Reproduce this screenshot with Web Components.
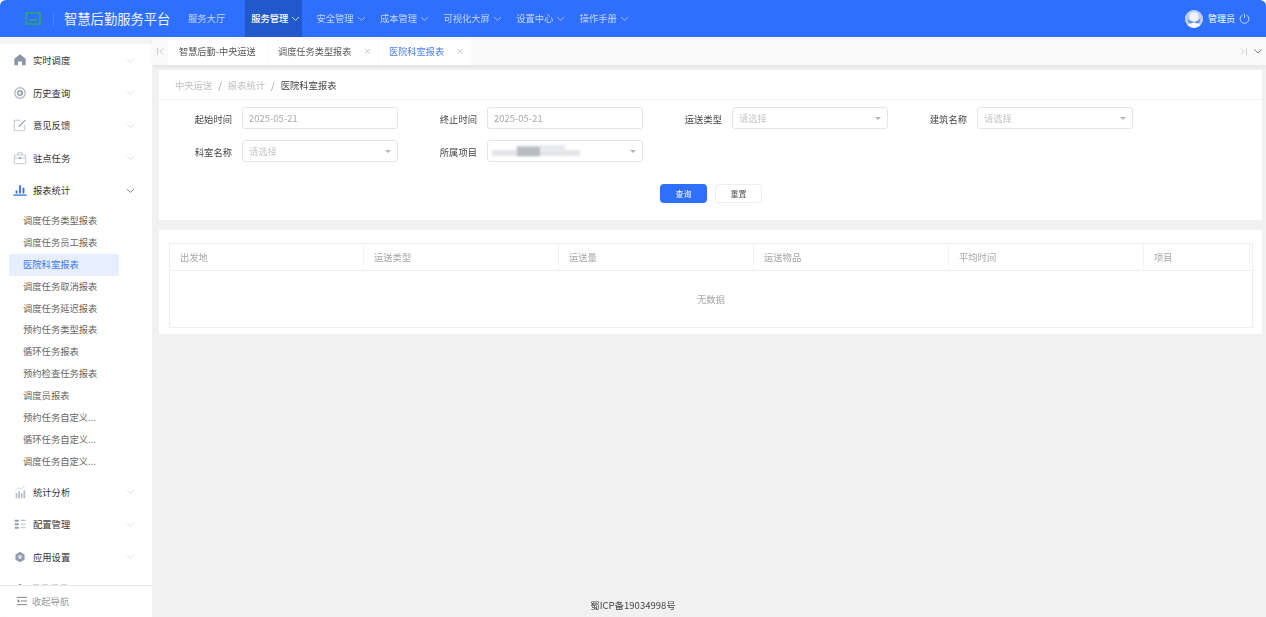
<!DOCTYPE html>
<html lang="zh">
<head>
<meta charset="utf-8">
<title>医院科室报表</title>
<style>
   html, body { margin: 0; height: 100%; overflow: hidden; background: #fff; }
   body { font-family: "Noto Sans CJK SC", "Noto Sans", sans-serif; font-size: 9.3px; }
</style>
</head>
<body>
<app-shell>
   <top-bar slot="top" title-text="智慧后勤服务平台" user="管理员">
      <top-link label="服务大厅" plain></top-link>
      <top-link label="服务管理" active></top-link>
      <top-link label="安全管理"></top-link>
      <top-link label="成本管理"></top-link>
      <top-link label="可视化大屏"></top-link>
      <top-link label="设置中心"></top-link>
      <top-link label="操作手册"></top-link>
   </top-bar>
   <side-nav slot="side">
      <side-group label="实时调度" icon="home"></side-group>
      <side-group label="历史查询" icon="history"></side-group>
      <side-group label="意见反馈" icon="edit"></side-group>
      <side-group label="驻点任务" icon="bag"></side-group>
      <side-group label="报表统计" icon="chart" open>
         <side-link>调度任务类型报表</side-link>
         <side-link>调度任务员工报表</side-link>
         <side-link active>医院科室报表</side-link>
         <side-link>调度任务取消报表</side-link>
         <side-link>调度任务延迟报表</side-link>
         <side-link>预约任务类型报表</side-link>
         <side-link>循环任务报表</side-link>
         <side-link>预约检查任务报表</side-link>
         <side-link>调度员报表</side-link>
         <side-link>预约任务自定义...</side-link>
         <side-link>循环任务自定义...</side-link>
         <side-link>调度任务自定义...</side-link>
      </side-group>
      <side-group label="统计分析" icon="stats"></side-group>
      <side-group label="配置管理" icon="list"></side-group>
      <side-group label="应用设置" icon="gear"></side-group>
      <!-- next group is cut off by the footer, only its top edge shows -->
      <side-group icon="gear" sliver></side-group>
   </side-nav>
   <tab-bar slot="tabs">
      <tab-item width="99">智慧后勤-中央运送</tab-item>
      <tab-item width="110" closable>调度任务类型报表</tab-item>
      <tab-item width="92" closable active>医院科室报表</tab-item>
   </tab-bar>
   <page-card>
      <bread-crumb path="中央运送,报表统计" current="医院科室报表"></bread-crumb>
      <search-form>
         <form-field label="起始时间"><text-box value="2025-05-21"></text-box></form-field>
         <form-field label="终止时间"><text-box value="2025-05-21"></text-box></form-field>
         <form-field label="运送类型"><text-box placeholder="请选择" select></text-box></form-field>
         <form-field label="建筑名称"><text-box placeholder="请选择" select></text-box></form-field>
         <form-field label="科室名称"><text-box placeholder="请选择" select></text-box></form-field>
         <form-field label="所属项目"><text-box select masked></text-box></form-field>
      </search-form>
   </page-card>
   <page-card spaced>
      <data-table columns="出发地,运送类型,运送量,运送物品,平均时间,项目" empty="无数据"></data-table>
   </page-card>
</app-shell>

<script>
'use strict';

// line icons for the side menu, all on a 16x16 box
const ICONS = {
   home: '<path fill="#8b95a3" d="M8 1.5 14.5 6.5V14H10.2V9.6H5.8V14H1.5V6.5Z"/>',
   history: '<circle cx="8" cy="8" r="6" fill="none" stroke="#b4bac2" stroke-width="1.6"/><circle cx="8" cy="8" r="2.6" fill="none" stroke="#949dab" stroke-width="1.6"/><path d="M8 8h3.4" stroke="#949dab" stroke-width="1.2"/>',
   edit: '<path fill="none" stroke="#bcc1c8" stroke-width="1" d="M13.5 8V14.5H1.5V2.5H9"/><path fill="none" stroke="#949dab" stroke-width="1.3" d="M6.5 10 14 2.5"/>',
   bag: '<rect x="1.5" y="4.5" width="13" height="10" rx="1" fill="none" stroke="#bcc1c8"/><path fill="none" stroke="#bcc1c8" d="M5.5 4.5V2h5v2.5M1.5 8h13"/><rect x="7" y="7.2" width="2" height="2" fill="#949dab"/>',
   chart: '<path fill="#2f6bea" d="M0.5 13H15.5V14.6H0.5ZM3 8.5h2v3.5H3ZM7 2.5h2v9.5H7ZM11 5.5h2v6.5h-2Z"/>',
   stats: '<path fill="#bcc1c8" d="M3 9h2v6H3ZM6 7h2v8H6ZM9 9h2v6H9ZM12 6h2v9h-2Z"/><path fill="none" stroke="#d0d4d9" d="M2.5 6 6 3 9 5 13.5 1"/>',
   list: '<path fill="#949dab" d="M2 3h4.5v2.5H2ZM2 7h4.5v2.5H2ZM2 11h4.5v2.5H2Z"/><path fill="#bcc1c8" d="M8.5 3.2h6v1.3h-6ZM8.5 7.6h6v1.3h-6ZM8.5 11.6h6v1.3h-6Z"/>',
   gear: '<path fill="#949dab" d="M8 2 13.2 5V11L8 14 2.8 11V5Z"/><circle cx="8" cy="8" r="2.2" fill="#dadde1"/>'
};

function chevron(color, size) {
   return '<svg width="' + size + '" height="' + size + '" viewBox="0 0 12 12"><path fill="none" stroke="' + color + '" stroke-width="1" d="M1.5 4 6 8.5 10.5 4"/></svg>';
}

// small helper so every element below just declares its markup
function shadow(el, html) {
   const root = el.attachShadow({mode: 'open'});
   root.innerHTML = html;
   return root;
}

class AppShell extends HTMLElement {
   constructor() {
      super();
      shadow(this, `<style>
         :host { display: grid; height: 100vh; grid-template-rows: 37px 1fr; grid-template-columns: 152px 1fr; background: #f1f1f1; border-radius: 6px 6px 0 6px; overflow: hidden; filter: blur(.3px); }
         .top { grid-column: 1 / 3; }
         .side { display: block; padding-top: 7px; background: #f5f5f5; min-height: 0; overflow: hidden; }
         main { display: flex; flex-direction: column; min-width: 0; min-height: 0; }
         .pages { flex: 1; display: flex; flex-direction: column; padding: 5px 4px 0 7px; }
         footer { height: 24px; text-align: center; color: #444; font-size: 9.5px; line-height: 24px; padding-right: 152px; }
      </style>
      <div class="top"><slot name="top"></slot></div>
      <div class="side"><slot name="side"></slot></div>
      <main>
         <slot name="tabs"></slot>
         <div class="pages"><slot></slot></div>
         <footer>蜀ICP备19034998号</footer>
      </main>`);
   }
}

class TopBar extends HTMLElement {
   constructor() {
      super();
      shadow(this, `<style>
         :host { display: flex; align-items: center; height: 37px; background: #2f6fff; color: #fff; }
         .logo { width: 64px; flex: none; display: flex; padding-left: 25px; box-sizing: border-box; position: relative; }
         .logo::after { content: ""; position: absolute; left: 53px; top: 0; height: 14px; width: 1px; background: rgba(255,255,255,.12); }
         h1 { margin: 0; width: 124px; flex: none; font-size: 13.3px; font-weight: 400; white-space: nowrap; color: #eef3ff; }
         nav { display: flex; align-items: stretch; align-self: stretch; flex: 1; }
         .user { display: flex; align-items: center; gap: 4px; padding-right: 16px; font-size: 9px; }
         .avatar { width: 18px; height: 18px; border-radius: 50%; background: #c6d6f7; overflow: hidden; margin-right: 1px; }
         .avatar svg { display: block; }
      </style>
      <div class="logo"><svg width="16" height="13" viewBox="0 0 16 13"><path fill="none" stroke="#2fa86b" stroke-width="1.6" d="M1 1H15V12H1Z"/><path stroke="#2fa86b" stroke-width="1.4" d="M4 8H12"/></svg></div>
      <h1>${this.getAttribute('title-text')}</h1>
      <nav><slot></slot></nav>
      <div class="user">
         <span class="avatar"><svg width="18" height="18" viewBox="0 0 19 19"><circle cx="9.5" cy="9.5" r="9.5" fill="#b9ccf3"/><circle cx="9.5" cy="7" r="5" fill="#eef3fc"/><path fill="#fff" d="M3 17C4 11 15 11 16 17L9.5 19Z"/><path fill="#5c88d9" d="M3 9C5 14 14 14 16 9 16 15 13 15 9.5 13 6 15 3 15 3 9Z"/></svg></span>
         <span>${this.getAttribute('user')}</span>
         <svg width="11" height="11" viewBox="0 0 12 12"><path fill="none" stroke="#dfe8ff" stroke-width=".9" d="M3.6 2.3A4.8 4.8 0 1 0 8.4 2.3M6 .8V5.5"/></svg>
      </div>`);
   }
}

class TopLink extends HTMLElement {
   constructor() {
      super();
      const on = this.hasAttribute('active');
      const plain = this.hasAttribute('plain');
      shadow(this, `<style>
         :host { display: flex; align-items: center; gap: 3px; padding: 0 ${on ? 2 : 0}px 1px ${on ? 6 : 0}px; margin-right: ${plain ? 20 : on ? 14 : 14.3}px; font-size: 9.3px;
            color: ${on ? '#fff' : '#c3d5ff'}; background: ${on ? '#2159cc' : 'none'}; font-weight: ${on ? 500 : 400}; white-space: nowrap; }
         svg { display: block; }
      </style>
      <span>${this.getAttribute('label')}</span>${plain ? '' : chevron(on ? '#fff' : '#c3d5ff', 9)}`);
   }
}

class SideNav extends HTMLElement {
   constructor() {
      super();
      shadow(this, `<style>
         :host { display: flex; flex-direction: column; height: 100%; background: #fff; }
         .list { flex: 1; min-height: 0; overflow: hidden; }
         .fold { flex: none; height: 32px; padding-bottom: 2px; box-sizing: border-box; border-top: 1px solid #e6e6e6; display: flex; align-items: center; gap: 5px; padding-left: 17px; color: #9a9a9a; font-size: 9.3px; }
         svg { display: block; }
      </style>
      <div class="list"><slot></slot></div>
      <div class="fold"><svg width="10" height="10" viewBox="0 0 11 10"><path stroke="#777" stroke-width="1" d="M0 1H11M4 5H11M0 9H11"/><path fill="#777" d="M0 5 2.5 3V7Z"/></svg><span>收起导航</span></div>`);
   }
}

class SideGroup extends HTMLElement {
   constructor() {
      super();
      const open = this.hasAttribute('open');
      const label = this.getAttribute('label');
      shadow(this, `<style>
         :host { display: block; }
         .head { display: flex; align-items: center; height: 32.5px; padding-left: 13px; color: #333; font-size: 9.3px; }
         .icon { width: 14px; height: 14px; margin-right: 6px; display: block; }
         .label { flex: 1; }
         .sliver { width: 37px; height: 10px; flex: none; background: repeating-linear-gradient(90deg, #d8d8d8 0 6px, transparent 6px 9.3px); }
         .arrow { margin-right: 17px; display: block; }
         .sub { display: ${open ? 'block' : 'none'}; padding: 3.5px 0 3px; }
      </style>
      <div class="head">
         <svg class="icon" viewBox="0 0 16 16">${ICONS[this.getAttribute('icon')]}</svg>
         ${this.hasAttribute('sliver') ? '<span class="sliver"></span>' : '<span class="label">' + label + '</span>' + chevron(open ? '#555' : '#cdd0d4', 9).replace('<svg', '<svg class="arrow"')}
      </div>
      <div class="sub"><slot></slot></div>`);
   }
}

class SideLink extends HTMLElement {
   constructor() {
      super();
      const on = this.hasAttribute('active');
      shadow(this, `<style>
         :host { display: block; width: 96px; height: 21.9px; line-height: 21.9px; margin-left: 9px; padding-left: 14px; font-size: 9.3px; white-space: nowrap;
            color: ${on ? '#3f78ee' : '#666'}; background: ${on ? '#e6eeff' : 'none'}; border-radius: 2px; }
      </style><slot></slot>`);
   }
}

class TabBar extends HTMLElement {
   constructor() {
      super();
      shadow(this, `<style>
         :host { display: flex; align-items: stretch; height: 28px; background: #fafafa; box-shadow: 0 2px 4px rgba(0,0,0,.06); position: relative; }
         .prev { width: 16px; display: flex; align-items: center; justify-content: center; }
         .tabs { display: flex; flex: 1; }
         .end { display: flex; align-items: center; gap: 6px; padding-right: 3px; }
         svg { display: block; }
      </style>
      <div class="prev"><svg width="7" height="7" viewBox="0 0 7 7"><path fill="none" stroke="#bbb" stroke-width=".8" d="M.5 0V7M6 .5 3 3.5 6 6.5"/></svg></div>
      <div class="tabs"><slot></slot></div>
      <div class="end">
         <svg width="7" height="7" viewBox="0 0 7 7"><path fill="none" stroke="#c4c4c4" stroke-width=".8" d="M6.5 0V7M1 .5 4 3.5 1 6.5"/></svg>
         ${chevron('#666', 10)}
      </div>`);
   }
}

class TabItem extends HTMLElement {
   constructor() {
      super();
      const on = this.hasAttribute('active');
      shadow(this, `<style>
         :host { display: flex; align-items: center; box-sizing: border-box; width: ${this.getAttribute('width')}px; padding-left: ${this.hasAttribute('closable') ? 10 : 11}px; padding-bottom: 1px; font-size: 9.2px; background: #fff;
            color: ${on ? '#4a7fee' : '#555'}; margin-right: 1px; white-space: nowrap; }
         .x { margin-left: 12px; color: #bbb; font-size: 8px; }
      </style><slot></slot>${this.hasAttribute('closable') ? '<span class="x">×</span>' : ''}`);
   }
}

class PageCard extends HTMLElement {
   constructor() {
      super();
      shadow(this, `<style>
         :host { display: block; background: #fff; margin-top: ${this.hasAttribute('spaced') ? 10 : 0}px; }
      </style><slot></slot>`);
   }
}

class BreadCrumb extends HTMLElement {
   constructor() {
      super();
      const parts = this.getAttribute('path').split(',').map(function(p) {
         return '<span class="dim">' + p + '</span><span class="sep">/</span>';
      }).join('');
      shadow(this, `<style>
         :host { display: flex; align-items: center; height: 29px; padding-left: 16px; border-bottom: 1px solid #f3f3f3; font-size: 9.3px; color: #444; }
         .dim { color: #c0c0c0; }
         .sep { margin: 0 6px; color: #999; }
      </style>${parts}<span>${this.getAttribute('current')}</span>`);
   }
}

class SearchForm extends HTMLElement {
   constructor() {
      super();
      shadow(this, `<style>
         :host { display: block; padding-top: 7px; height: 113px; }
         .grid { display: grid; grid-template-columns: repeat(4, 245px); row-gap: 11px; }
         .actions { display: flex; justify-content: center; gap: 8px; margin-top: 22px; padding-left: 1px; }
         button { width: 47px; height: 19px; border-radius: 4px; font: inherit; font-size: 8px; padding: 0; box-sizing: border-box; }
         .go { background: #2f6fff; border: 0; color: #fff; }
         .reset { background: #fff; border: 1px solid #eee; color: #555; }
      </style>
      <div class="grid"><slot></slot></div>
      <div class="actions"><button class="go">查询</button><button class="reset">重置</button></div>`);
   }
}

class FormField extends HTMLElement {
   constructor() {
      super();
      shadow(this, `<style>
         :host { display: flex; align-items: center; height: 22px; }
         label { width: 73px; margin-right: 10px; text-align: right; color: #444; font-size: 9.3px; padding-top: 1px; }
      </style><label>${this.getAttribute('label')}</label><slot></slot>`);
   }
}

class TextBox extends HTMLElement {
   constructor() {
      super();
      const value = this.getAttribute('value');
      const text = value || this.getAttribute('placeholder') || '';
      const masked = this.hasAttribute('masked');
      shadow(this, `<style>
         :host { display: flex; align-items: center; box-sizing: border-box; width: 156px; height: 22px; padding: 0 6px 1px; border: 1px solid #e3e5e8; border-radius: 3px; background: #fff; }
         .t { flex: 1; font-size: 9.3px; color: ${value ? '#a8a8a8' : '#c6c6c6'}; letter-spacing: ${value ? '.1px' : '0'}; }
         .caret { width: 0; height: 0; border: 3px solid transparent; border-top: 3.5px solid #b5b5b5; border-bottom: 0; margin-top: 2px; }
         .mask { flex: 1; height: 11px; position: relative; left: -2px; }
         .mask i { position: absolute; filter: blur(1px); }
      </style>
      ${masked ? '<div class="mask"><i style="left:0;width:88px;top:5px;height:6px;background:#e3e5e8"></i><i style="left:25px;width:48px;top:0;height:6px;background:#e8e9ec"></i><i style="left:25px;width:23px;top:2px;height:9px;background:#b8bbc0"></i></div>' : '<span class="t">' + text + '</span>'}
      ${this.hasAttribute('select') ? '<span class="caret"></span>' : ''}`);
   }
}

class DataTable extends HTMLElement {
   constructor() {
      super();
      const cols = this.getAttribute('columns').split(',').map(function(c) {
         return '<div class="th">' + c + '</div>';
      }).join('');
      shadow(this, `<style>
         :host { display: block; padding: 13px 9px 6px 10px; }
         .box { border: 1px solid #efefef; }
         .head { display: grid; grid-template-columns: 194px repeat(4, 195px) 106px 2px; height: 27px; border-bottom: 1px solid #efefef; box-sizing: border-box; }
         .th { display: flex; align-items: center; padding-left: 10px; border-right: 1px solid #f3f3f3; color: #a6a6a6; font-size: 9.3px; min-width: 0; }
         .empty { height: 56px; display: flex; align-items: center; justify-content: center; color: #a6a6a6; font-size: 9.3px; }
      </style>
      <div class="box">
         <div class="head">${cols}<div></div></div>
         <div class="empty">${this.getAttribute('empty')}</div>
      </div>`);
   }
}

customElements.define('app-shell', AppShell);
customElements.define('top-bar', TopBar);
customElements.define('top-link', TopLink);
customElements.define('side-nav', SideNav);
customElements.define('side-group', SideGroup);
customElements.define('side-link', SideLink);
customElements.define('tab-bar', TabBar);
customElements.define('tab-item', TabItem);
customElements.define('page-card', PageCard);
customElements.define('bread-crumb', BreadCrumb);
customElements.define('search-form', SearchForm);
customElements.define('form-field', FormField);
customElements.define('text-box', TextBox);
customElements.define('data-table', DataTable);
</script>
</body>
</html>
